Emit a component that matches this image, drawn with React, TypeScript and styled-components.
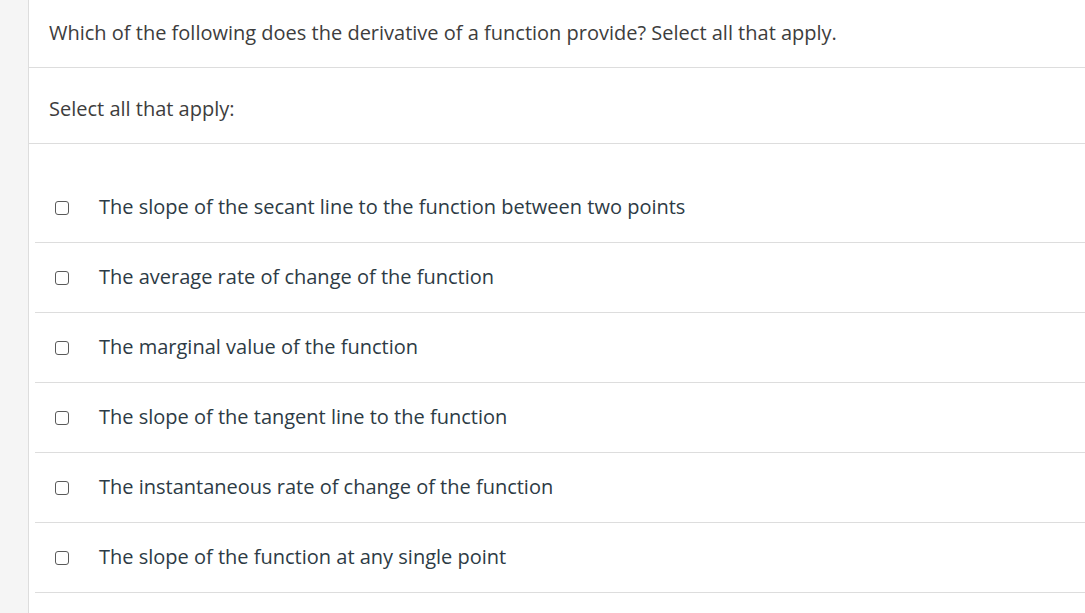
import React from "react";
import styled, { createGlobalStyle } from "styled-components";

const Global = createGlobalStyle`
  html, body { margin: 0; padding: 0; background: #ffffff; }
  body { font-family: "Open Sans", "Noto Sans", sans-serif; }
`;

const Page = styled.div`
  display: flex;
  width: 1085px;
  height: 613px;
  overflow: hidden;
`;

const Sidebar = styled.div`
  width: 28px;
  flex: none;
  background: #f5f5f5;
  border-right: 1px solid #dddddd;
`;

const Main = styled.div`
  flex: 1;
  display: flex;
  flex-direction: column;
`;

const Section = styled.div<{ $h: number; $pt: number; $pb: number }>`
  height: ${(p) => p.$h}px;
  box-sizing: border-box;
  display: flex;
  align-items: center;
  padding: ${(p) => p.$pt}px 0 ${(p) => p.$pb}px 20px;
  border-bottom: 1px solid #dddddd;
  font-size: 20px;
  color: #3d3d3d;
`;

const List = styled.div`
  padding: 29px 0 0 6px;
  display: flex;
  flex-direction: column;
`;

const Option = styled.label`
  height: 70px;
  box-sizing: border-box;
  display: flex;
  align-items: center;
  padding-bottom: 2px;
  border-bottom: 1px solid #dddddd;
  font-size: 20px;
  color: #2d3b45;
`;

const Box = styled.span`
  width: 12px;
  height: 12px;
  margin: 2px 30px 0 20px;
  border: 1.5px solid #5a5a5a;
  border-radius: 3px;
  background: #fff;
  flex: none;
`;

const options = [
  "The slope of the secant line to the function between two points",
  "The average rate of change of the function",
  "The marginal value of the function",
  "The slope of the tangent line to the function",
  "The instantaneous rate of change of the function",
  "The slope of the function at any single point",
];

export default function App() {
  return (
    <Page>
      <Global />
      <Sidebar />
      <Main>
        <Section $h={68} $pt={0} $pb={2}>
          Which of the following does the derivative of a function provide? Select all that apply.
        </Section>
        <Section $h={76} $pt={6} $pb={0}>Select all that apply:</Section>
        <List>
          {options.map((o) => (
            <Option key={o}>
              <Box />
              {o}
            </Option>
          ))}
        </List>
      </Main>
    </Page>
  );
}
